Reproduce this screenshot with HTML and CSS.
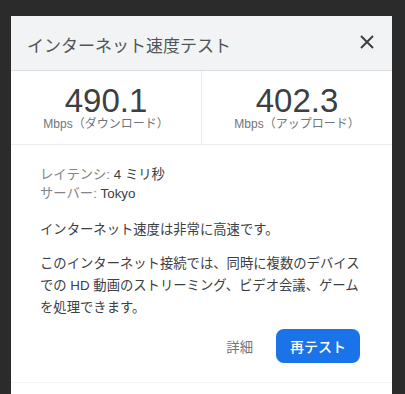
FILE: index.html
```html
<!DOCTYPE html>
<html lang="ja">
<head>
    <meta charset="UTF-8">
    <meta name="viewport" content="width=device-width, initial-scale=1.0">
    <title>インターネット速度テスト</title>
    <link rel="stylesheet" href="styles.css">
</head>
<body>

    <div class="dialog">
        <div class="dialog-header">
            <h1>インターネット速度テスト</h1>
            <button class="close-btn" aria-label="閉じる">
                <svg width="14" height="14" viewBox="0 0 14 14">
                    <path d="M1 1 L13 13 M13 1 L1 13" stroke="#3c4043" stroke-width="2" fill="none"/>
                </svg>
            </button>
        </div>

        <div class="stats">
            <div class="stat">
                <div class="stat-value">490.1</div>
                <div class="stat-label">Mbps（ダウンロード）</div>
            </div>
            <div class="stat">
                <div class="stat-value">402.3</div>
                <div class="stat-label">Mbps（アップロード）</div>
            </div>
        </div>

        <div class="dialog-body">
            <div class="meta">
                <div><span class="meta-key">レイテンシ:</span> 4 ミリ秒</div>
                <div><span class="meta-key">サーバー:</span> Tokyo</div>
            </div>

            <p class="summary">インターネット速度は非常に高速です。</p>

            <p>このインターネット接続では、同時に複数のデバイスでの HD 動画のストリーミング、ビデオ会議、ゲームを処理できます。</p>

            <div class="actions">
                <button class="link-btn">詳細</button>
                <button class="primary-btn">再テスト</button>
            </div>
        </div>

        <div class="dialog-footer"></div>
    </div>

</body>
</html>
```

FILE: styles.css
```css
body {
    background-color: #2b2b2b;
    font-family: 'Liberation Sans', 'Noto Sans CJK JP', sans-serif;
    margin: 0;
    padding: 16px 0 0 11px;
}

.dialog {
    width: 381px;
    background-color: #ffffff;
}

.dialog-header {
    display: flex;
    align-items: center;
    justify-content: space-between;
    height: 54px;
    padding: 0 18px 0 16px;
    background-color: #f1f3f4;
    border-bottom: 1px solid #dadce0;
}

.dialog-header h1 {
    margin: 3px 0 0;
    font-size: 17px;
    font-weight: normal;
    color: #50555a;
}

.close-btn {
    display: flex;
    padding: 0;
    margin-bottom: 2px;
    background: none;
    border: none;
    cursor: pointer;
}

.stats {
    display: flex;
    border-bottom: 1px solid #ebebeb;
}

.stat {
    flex: 1;
    text-align: center;
    padding: 12px 0 13px;
}

.stat + .stat {
    border-left: 1px solid #ebebeb;
}

.stat-value {
    font-size: 33px;
    line-height: 36px;
    color: #3c4043;
}

.stat-label {
    font-size: 12px;
    line-height: 14px;
    margin-top: -2px;
    color: #70757a;
}

.dialog-body {
    padding: 20px 26px 19px 29px;
    font-size: 13.33px;
    color: #3c4043;
}

.meta {
    line-height: 19px;
}

.meta-key {
    color: #80868b;
}

.dialog-body p {
    margin: 12px 0 0;
    line-height: 22px;
}

.dialog-body .summary {
    margin-top: 16px;
}

.actions {
    display: flex;
    justify-content: flex-end;
    align-items: center;
    gap: 23px;
    margin-top: 10px;
    padding-right: 6px;
}

.link-btn {
    padding: 0;
    background: none;
    border: none;
    font-family: inherit;
    font-size: 13.33px;
    color: #70757a;
    cursor: pointer;
}

.primary-btn {
    width: 84px;
    height: 34px;
    background-color: #1a73e8;
    color: white;
    border: none;
    border-radius: 8px;
    font-family: inherit;
    font-size: 14px;
    font-weight: 500;
    cursor: pointer;
}

.dialog-footer {
    height: 12px;
    border-top: 1px solid #f1f3f4;
}
```
